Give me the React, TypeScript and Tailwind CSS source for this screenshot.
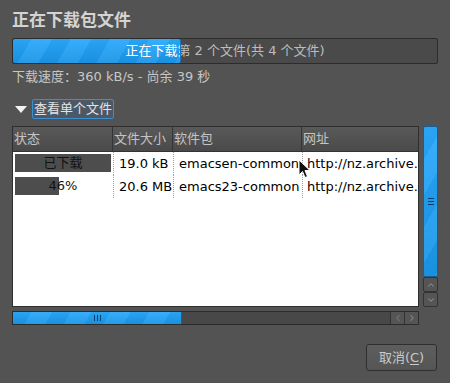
import { ChevronDown, ChevronLeft, ChevronRight, ChevronUp } from "lucide-react";

const columns = [
  { label: "状态", width: "w-[100px]" },
  { label: "文件大小", width: "w-[60px]" },
  { label: "软件包", width: "w-[129px]" },
  { label: "网址", width: "w-[118px]" },
];

const rows = [
  { status: "已下载", pct: 100, size: "19.0 kB", pkg: "emacsen-common", url: "http://nz.archive.ubuntu.com/ubuntu/" },
  { status: "46%", pct: 46, size: "20.6 MB", pkg: "emacs23-common", url: "http://nz.archive.ubuntu.com/ubuntu/" },
];

const blue =
  "bg-[linear-gradient(to_bottom,rgba(255,255,255,0.06),rgba(0,0,0,0.08)),repeating-linear-gradient(120deg,#1c9df2_0px,#1c9df2_16px,#2aa8fb_16px,#2aa8fb_34px)]";

function Cursor() {
  return (
    <svg className="absolute left-[298px] top-[159px]" width="13" height="20" viewBox="0 0 13 20">
      <path d="M1 1 L1 16 L4.5 12.5 L7 18.5 L9.5 17.5 L7 11.5 L12 11.5 Z" fill="#111" stroke="#fff" strokeWidth="1" strokeLinejoin="round" />
    </svg>
  );
}

export default function App() {
  return (
    <div className="relative flex h-[383px] w-[450px] flex-col bg-[#535353] px-3 text-[13px] text-[#cdcdcd] [font-family:'DejaVu_Sans','Noto_Sans_CJK_SC',sans-serif]">
      <div className="mt-[9px] h-[22px] text-[17px] leading-[22px] font-bold text-[#d4d4d4]">正在下载包文件</div>

      {/* overall progress */}
      <div className="relative mt-[7px] h-[26px] w-[426px] overflow-hidden rounded-[2px] border border-[#2c2c2c] bg-[#4a4a4a]">
        <div className="absolute inset-0 flex items-center justify-center text-[#bdbdbd]">
          正在下载第 2 个文件(共 4 个文件)
        </div>
        <div className={`absolute inset-y-0 left-0 w-[168px] overflow-hidden rounded-[2px] border-r border-[#1677c0] ${blue}`}>
          <div className="flex h-full w-[424px] items-center justify-center text-white">
            正在下载第 2 个文件(共 4 个文件)
          </div>
        </div>
      </div>

      <div className="mt-[4px] h-[18px] leading-[18px] text-[#c6c6c6]">下载速度：360 kB/s - 尚余 39 秒</div>

      {/* expander */}
      <div className="mt-[13px] flex h-[20px] items-center">
        <svg width="12" height="7" viewBox="0 0 12 7" className="ml-[3px] mr-[5px]">
          <path d="M0 0 L12 0 L6 7 Z" fill="#f2f2f2" />
        </svg>
        <div className="flex h-[20px] items-center rounded-[2px] border border-[#3a8fd2] bg-[#4b5966] px-[1px] text-[#e4e4e4]">
          查看单个文件
        </div>
      </div>

      {/* file list */}
      <div className="mt-[7px] flex h-[181px] gap-[4px]">
        <div className="relative flex w-[407px] flex-col overflow-hidden border border-[#2e2e2e] bg-white">
          <div className="flex h-[25px] shrink-0 border-b border-[#333] bg-[linear-gradient(to_bottom,#595959,#4a4a4a)]">
            {columns.map((c) => (
              <div key={c.label} className={`${c.width} flex shrink-0 items-center border-r border-[#353535] pl-[1px] text-[#c4c4c4]`}>
                {c.label}
              </div>
            ))}
          </div>
          {rows.map((r) => (
            <div key={r.pkg} className="flex h-[23px] shrink-0 whitespace-nowrap text-black">
              <div className="w-[100px] shrink-0 px-[2px] pt-[2px] pb-[3px]">
                <div className="relative h-[18px] w-full">
                  <div className="absolute inset-y-0 left-0 bg-[#4d4d4d]" style={{ width: `${r.pct}%` }} />
                  <div className="relative flex h-full items-center justify-center text-[#111]">{r.status}</div>
                </div>
              </div>
              <div className="flex w-[60px] shrink-0 items-center overflow-hidden border-l border-dotted border-[#9c9c9c] pl-[5px]">{r.size}</div>
              <div className="flex w-[129px] shrink-0 items-center overflow-hidden border-l border-dotted border-[#9c9c9c] pl-[5px]">{r.pkg}</div>
              <div className="flex w-[118px] shrink-0 items-center overflow-hidden border-l border-dotted border-[#9c9c9c] pl-[4px]">{r.url}</div>
            </div>
          ))}
        </div>

        {/* vertical scrollbar */}
        <div className="flex w-[15px] flex-col">
          <div className={`flex flex-1 items-center justify-center rounded-[2px] border border-[#1a5e96] ${blue}`}>
            <div className="flex flex-col gap-[2px]">
              <div className="h-px w-[6px] bg-[#0b3f6a]" />
              <div className="h-px w-[6px] bg-[#0b3f6a]" />
              <div className="h-px w-[6px] bg-[#0b3f6a]" />
            </div>
          </div>
          <div className="flex h-[15px] items-center justify-center rounded-[2px] border border-[#333] bg-[#555]">
            <ChevronUp size={10} strokeWidth={2.5} className="text-[#8c8c8c]" />
          </div>
          <div className="flex h-[15px] items-center justify-center rounded-[2px] border border-[#333] bg-[#555]">
            <ChevronDown size={10} strokeWidth={2.5} className="text-[#8c8c8c]" />
          </div>
        </div>
      </div>

      {/* horizontal scrollbar */}
      <div className="mt-[4px] flex h-[14px] w-[407px] border border-[#2c2c2c] bg-[#484848]">
        <div className={`flex w-[169px] items-center justify-center border-r border-[#1a5e96] ${blue}`}>
          <div className="flex gap-[2px]">
            <div className="h-[6px] w-px bg-[#0b3f6a]" />
            <div className="h-[6px] w-px bg-[#0b3f6a]" />
            <div className="h-[6px] w-px bg-[#0b3f6a]" />
          </div>
        </div>
        <div className="flex-1" />
        <div className="flex w-[14px] items-center justify-center border-l border-[#333] bg-[#555]">
          <ChevronLeft size={10} strokeWidth={2.5} className="text-[#7c7c7c]" />
        </div>
        <div className="flex w-[14px] items-center justify-center border-l border-[#333] bg-[#555]">
          <ChevronRight size={10} strokeWidth={2.5} className="text-[#8c8c8c]" />
        </div>
      </div>

      <div className="mt-[19px] flex justify-end">
        <button className="mr-[1px] flex h-[27px] w-[71px] items-center justify-center rounded-[3px] border border-[#2f2f2f] bg-[linear-gradient(to_bottom,#5e5e5e,#555)] text-[#cacaca]">
          取消(<span className="underline underline-offset-2">C</span>)
        </button>
      </div>

      <Cursor />
    </div>
  );
}
